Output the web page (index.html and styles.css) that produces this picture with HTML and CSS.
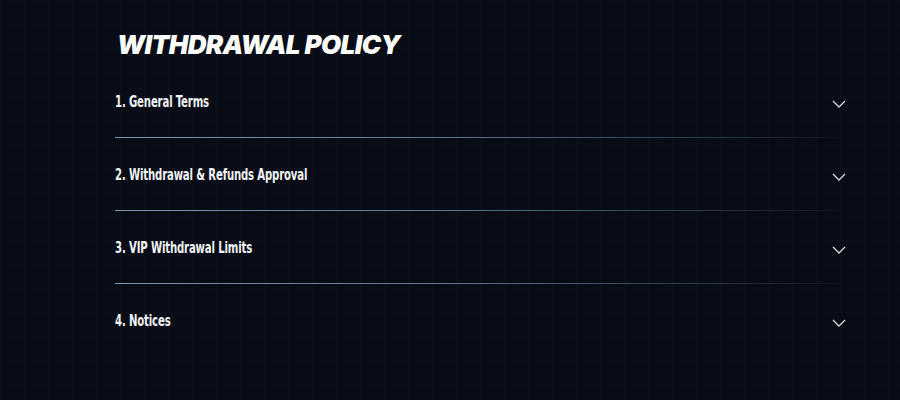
FILE: index.html
```html
<!DOCTYPE html>
<html lang="en">
<head>
<meta charset="utf-8">
<title>Withdrawal Policy</title>
<link rel="stylesheet" href="styles.css">
</head>
<body>
<main class="policy">
  <h1 class="policy-title">WITHDRAWAL POLICY</h1>
  <div class="accordion">
    <div class="acc-item">
      <span class="acc-label">1. General Terms</span>
      <svg class="chev" viewBox="0 0 14 8" width="14" height="8"><path d="M1 1l6 6 6-6" fill="none" stroke="currentColor" stroke-width="1.3"/></svg>
    </div>
    <div class="acc-item">
      <span class="acc-label">2. Withdrawal &amp; Refunds Approval</span>
      <svg class="chev" viewBox="0 0 14 8" width="14" height="8"><path d="M1 1l6 6 6-6" fill="none" stroke="currentColor" stroke-width="1.3"/></svg>
    </div>
    <div class="acc-item">
      <span class="acc-label">3. VIP Withdrawal Limits</span>
      <svg class="chev" viewBox="0 0 14 8" width="14" height="8"><path d="M1 1l6 6 6-6" fill="none" stroke="currentColor" stroke-width="1.3"/></svg>
    </div>
    <div class="acc-item last">
      <span class="acc-label">4. Notices</span>
      <svg class="chev" viewBox="0 0 14 8" width="14" height="8"><path d="M1 1l6 6 6-6" fill="none" stroke="currentColor" stroke-width="1.3"/></svg>
    </div>
  </div>
</main>
</body>
</html>
```
FILE: styles.css
```css
html, body {
  margin: 0;
  height: 100%;
}

body {
  background-color: #070c16;
  background-image:
    linear-gradient(rgba(255,255,255,0.008) 1px, transparent 1px),
    linear-gradient(90deg, rgba(255,255,255,0.008) 1px, transparent 1px);
  background-size: 24px 24px;
  color: #f2f4f7;
  font-family: "DejaVu Sans Condensed", sans-serif;
}

.policy {
  padding: 30px 54px 0 115px;
}

.policy-title {
  margin: 0 0 0 2px;
  font-family: Inter, sans-serif;
  font-weight: 900;
  font-style: oblique 12deg;
  font-size: 26px;
  line-height: 30px;
  letter-spacing: -0.6px;
  color: #ffffff;
}

.accordion {
  margin-top: 5px;
}

.acc-item {
  display: flex;
  align-items: center;
  justify-content: space-between;
  height: 72px;
  border-bottom: 1px solid transparent;
  border-image: linear-gradient(90deg, #7a97a9 0%, #5e7788 45%, rgba(60,80,95,0.25) 95%, rgba(60,80,95,0) 100%) 1;
}

.acc-item.last {
  border-image: none;
  border-bottom-color: transparent;
}

/* narrow the condensed face further for the tall, tight headline look */
.acc-label {
  display: inline-block;
  font-weight: 700;
  font-size: 15px;
  letter-spacing: -0.2px;
  margin-top: 2px;
  transform: scaleX(0.75);
  transform-origin: left center;
}

.chev {
  color: #d5d9de;
  margin-top: 5px;
}
```
